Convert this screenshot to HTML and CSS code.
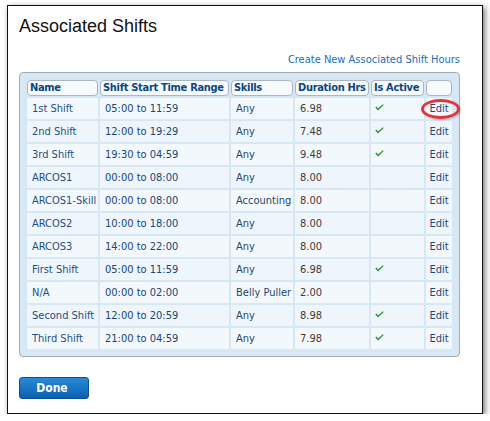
FILE: index.html
```html
<!DOCTYPE html>
<html>
<head>
<meta charset="utf-8">
<link rel="stylesheet" href="styles.css">
</head>
<body>
<div class="window">
  <h1 class="title">Associated Shifts</h1>
  <div class="linkrow"><a class="link" href="#">Create New Associated Shift Hours</a></div>
  <div class="panel">
    <table class="grid">
      <thead>
        <tr>
          <th class="c-name">Name</th>
          <th class="c-time">Shift Start Time Range</th>
          <th class="c-skill">Skills</th>
          <th class="c-dur">Duration Hrs</th>
          <th class="c-act">Is Active</th>
          <th class="c-edit"></th>
        </tr>
      </thead>
      <tbody>
        <tr><td class="name">1st Shift</td><td class="time">05:00 to 11:59</td><td class="skill">Any</td><td class="dur">6.98</td><td class="act"><svg class="chk" viewBox="0 0 9 7" width="9" height="7"><path d="M0.3 3.6 L3 6.6 L8.7 0.9 L7.9 0.2 L3 4.6 L1.5 2.6 Z" fill="#22972a"/></svg></td><td class="edit circled">Edit<span class="ring"></span></td></tr>
        <tr class="alt"><td class="name">2nd Shift</td><td class="time">12:00 to 19:29</td><td class="skill">Any</td><td class="dur">7.48</td><td class="act"><svg class="chk" viewBox="0 0 9 7" width="9" height="7"><path d="M0.3 3.6 L3 6.6 L8.7 0.9 L7.9 0.2 L3 4.6 L1.5 2.6 Z" fill="#22972a"/></svg></td><td class="edit">Edit</td></tr>
        <tr><td class="name">3rd Shift</td><td class="time">19:30 to 04:59</td><td class="skill">Any</td><td class="dur">9.48</td><td class="act"><svg class="chk" viewBox="0 0 9 7" width="9" height="7"><path d="M0.3 3.6 L3 6.6 L8.7 0.9 L7.9 0.2 L3 4.6 L1.5 2.6 Z" fill="#22972a"/></svg></td><td class="edit">Edit</td></tr>
        <tr class="alt"><td class="name">ARCOS1</td><td class="time">00:00 to 08:00</td><td class="skill">Any</td><td class="dur">8.00</td><td class="act"></td><td class="edit">Edit</td></tr>
        <tr><td class="name">ARCOS1-Skill</td><td class="time">00:00 to 08:00</td><td class="skill">Accounting</td><td class="dur">8.00</td><td class="act"></td><td class="edit">Edit</td></tr>
        <tr class="alt"><td class="name">ARCOS2</td><td class="time">10:00 to 18:00</td><td class="skill">Any</td><td class="dur">8.00</td><td class="act"></td><td class="edit">Edit</td></tr>
        <tr><td class="name">ARCOS3</td><td class="time">14:00 to 22:00</td><td class="skill">Any</td><td class="dur">8.00</td><td class="act"></td><td class="edit">Edit</td></tr>
        <tr class="alt"><td class="name">First Shift</td><td class="time">05:00 to 11:59</td><td class="skill">Any</td><td class="dur">6.98</td><td class="act"><svg class="chk" viewBox="0 0 9 7" width="9" height="7"><path d="M0.3 3.6 L3 6.6 L8.7 0.9 L7.9 0.2 L3 4.6 L1.5 2.6 Z" fill="#22972a"/></svg></td><td class="edit">Edit</td></tr>
        <tr><td class="name">N/A</td><td class="time">00:00 to 02:00</td><td class="skill">Belly Puller</td><td class="dur">2.00</td><td class="act"></td><td class="edit">Edit</td></tr>
        <tr class="alt"><td class="name">Second Shift</td><td class="time">12:00 to 20:59</td><td class="skill">Any</td><td class="dur">8.98</td><td class="act"><svg class="chk" viewBox="0 0 9 7" width="9" height="7"><path d="M0.3 3.6 L3 6.6 L8.7 0.9 L7.9 0.2 L3 4.6 L1.5 2.6 Z" fill="#22972a"/></svg></td><td class="edit">Edit</td></tr>
        <tr><td class="name">Third Shift</td><td class="time">21:00 to 04:59</td><td class="skill">Any</td><td class="dur">7.98</td><td class="act"><svg class="chk" viewBox="0 0 9 7" width="9" height="7"><path d="M0.3 3.6 L3 6.6 L8.7 0.9 L7.9 0.2 L3 4.6 L1.5 2.6 Z" fill="#22972a"/></svg></td><td class="edit">Edit</td></tr>
      </tbody>
    </table>
  </div>
  <button class="done">Done</button>
</div>
</body>
</html>
```

FILE: styles.css
```css
html, body {
  margin: 0;
  padding: 0;
  background: #ffffff;
}
body {
  padding: 5px 0 0 7px;
}
.window {
  box-sizing: border-box;
  width: 476px;
  height: 409px;
  border: 1px solid #111111;
  background: #ffffff;
  box-shadow: 2px 2px 6px rgba(0, 0, 0, 0.55);
  padding: 10px 0 0 11px;
  font-family: "DejaVu Sans Condensed", "DejaVu Sans", sans-serif;
  font-stretch: condensed;
}
.title {
  margin: 0;
  font-family: "Liberation Sans", Arial, sans-serif;
  font-stretch: normal;
  font-weight: normal;
  font-size: 18px;
  line-height: 20px;
  color: #111111;
}
.linkrow {
  width: 441px;
  text-align: right;
  margin-top: 17px;
  line-height: 14px;
  font-size: 11px;
}
.link {
  color: #1a6db8;
  text-decoration: none;
}
.panel {
  box-sizing: border-box;
  width: 441px;
  margin-top: 5px;
  border: 1px solid #a3acb5;
  border-radius: 4px;
  background: #d8e7f4;
  padding: 5px;
}
.grid {
  border-collapse: separate;
  border-spacing: 2px;
  width: 100%;
  table-layout: fixed;
  font-size: 11px;
}
.grid th {
  box-sizing: border-box;
  height: 16px;
  border: 1px solid #a9b6c4;
  border-radius: 4px;
  background: #f6fafd;
  color: #0b467f;
  font-weight: bold;
  text-align: left;
  padding: 0 1px 0 2px;
  white-space: nowrap;
  overflow: hidden;
  line-height: 14px;
  letter-spacing: -0.3px;
}
.c-name { width: 71px; }
.c-time { width: 129px; }
.c-skill { width: 62px; }
.c-dur { width: 74px; }
.c-act { width: 53px; }
.c-edit { width: 26px; }
.grid td {
  height: 21px;
  padding: 0 0 0 5px;
  background: #f3f8fd;
  white-space: nowrap;
  overflow: hidden;
  line-height: 14px;
}
.grid tr.alt td {
  background: #eef5fb;
}
.name { color: #1f4f80; }
.time { color: #1a4573; }
.skill { color: #27466a; }
.dur { color: #463a33; }
.grid td.act {
  vertical-align: top;
  padding: 0;
}
.chk {
  display: block;
  margin: 6px 0 0 4px;
}
.grid td.edit {
  color: #1c4a78;
  text-align: center;
  padding: 0;
  overflow: visible;
}
.circled {
  position: relative;
}
.ring {
  position: absolute;
  left: -5px;
  top: 1px;
  width: 33px;
  height: 14px;
  border: 3px solid #e2353a;
  border-radius: 50%;
  box-shadow: 1px 1px 2px rgba(0, 0, 0, 0.25);
}
.done {
  display: block;
  margin-top: 20px;
  box-sizing: border-box;
  width: 70px;
  height: 22px;
  border: 1px solid #0a4f94;
  border-radius: 3px;
  background: linear-gradient(#2a8ad8, #0b60ae);
  color: #ffffff;
  font-family: "DejaVu Sans Condensed", "DejaVu Sans", sans-serif;
  font-stretch: condensed;
  font-weight: bold;
  font-size: 12px;
  padding: 0;
  padding-right: 4px;
}
```
